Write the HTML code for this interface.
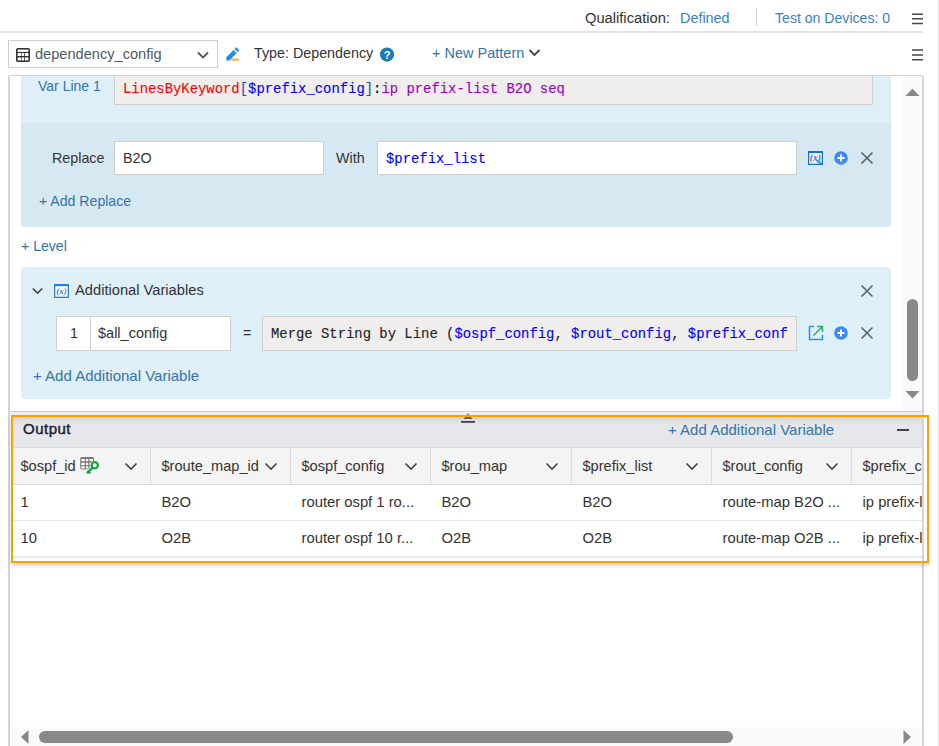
<!DOCTYPE html>
<html><head><meta charset="utf-8">
<style>
html,body{margin:0;padding:0;}
body{width:939px;height:746px;overflow:hidden;position:relative;background:#fff;font-family:"Liberation Sans",sans-serif;color:#333;}
.a{position:absolute;}
.t{position:absolute;white-space:nowrap;line-height:1;}
.mono{font-family:"Liberation Mono",monospace;-webkit-text-stroke:0.12px currentColor;}
.link{color:#3473ad;}
.box{position:absolute;box-sizing:border-box;}
</style></head><body>

<!-- right edge line -->
<div class="a" style="left:938px;top:0;width:1px;height:746px;background:#e3e7ec"></div>

<!-- top bar -->
<div class="t" style="left:585px;top:11px;font-size:14.7px;color:#333">Qualification:</div>
<div class="t" style="left:680px;top:11px;font-size:14.4px;color:#3b7fc2">Defined</div>
<div class="a" style="left:756px;top:8px;width:1px;height:18px;background:#d0d4d8"></div>
<div class="t" style="left:775px;top:11px;font-size:14.1px;color:#3b7fc2">Test on Devices: 0</div>
<svg class="a" style="left:910px;top:10px" width="16" height="18" viewBox="910 10 16 18"><path d="M912 14.2 H923 M912 18.8 H923 M912 23.4 H923" stroke="#4a4a4a" stroke-width="1.5"/></svg>
<div class="a" style="left:0;top:31px;width:923px;height:2px;background:#e0e4e8"></div>

<!-- toolbar -->
<div class="box" style="left:8px;top:40px;width:210px;height:28px;border:1px solid #cfcfcf;background:#fff"></div>
<svg class="a" style="left:16px;top:48px" width="14" height="14" viewBox="0 0 14 14">
  <rect x="0" y="0" width="14" height="14" rx="1.8" fill="#333"/>
  <g fill="#fff"><rect x="1.6" y="1.6" width="10.8" height="2.3"/>
  <rect x="1.6" y="5" width="3.3" height="3"/><rect x="5.6" y="5" width="2.5" height="3"/><rect x="8.9" y="5" width="3.5" height="3"/>
  <rect x="1.6" y="9.4" width="3.3" height="3"/><rect x="5.6" y="9.4" width="2.5" height="3"/><rect x="8.9" y="9.4" width="3.5" height="3"/></g>
</svg>
<div class="t" style="left:35px;top:47px;font-size:14.6px;color:#4e5a68">dependency_config</div>
<svg class="a" style="left:196px;top:50px" width="14" height="10" viewBox="0 0 14 10"><path d="M2 2.5 L7 7.5 L12 2.5" fill="none" stroke="#555" stroke-width="1.8"/></svg>
<svg class="a" style="left:224px;top:45px" width="17" height="17" viewBox="0 0 17 17">
  <path d="M2.3 15.5 L2.3 12.3 L9.6 5 L12.6 8 L5.5 15.5 Z" fill="#1e8ff0"/>
  <path d="M10.6 4 L12.3 2.3 L15.3 5.3 L13.6 7 Z" fill="#1e8ff0"/>
  <rect x="7" y="13.5" width="8" height="2.3" rx="1" fill="#f5b042"/>
</svg>
<div class="t" style="left:254px;top:46px;font-size:14.3px;color:#333">Type: Dependency</div>
<svg class="a" style="left:379px;top:47px" width="16" height="15" viewBox="0 0 16 15">
  <circle cx="8" cy="7.6" r="7.1" fill="#1f7ab8"/>
  <text x="8" y="11.9" text-anchor="middle" font-family="Liberation Sans" font-weight="bold" font-size="11" fill="#fff">?</text>
</svg>
<div class="t link" style="left:432px;top:46px;font-size:14.5px">+ New Pattern</div>
<svg class="a" style="left:527px;top:47px" width="15" height="12" viewBox="0 0 15 12"><path d="M2.5 3 L7.5 8 L12.5 3" fill="none" stroke="#444" stroke-width="1.8"/></svg>
<svg class="a" style="left:910px;top:45px" width="16" height="18" viewBox="910 45 16 18"><path d="M912 50 H923 M912 54.9 H923 M912 59.8 H923" stroke="#4a4a4a" stroke-width="1.5"/></svg>

<!-- main panel -->
<div class="box" style="left:8px;top:75px;width:916px;height:672px;border:1px solid #d2d2d2;border-left:2px solid #d4d4d4;border-right:2px solid #d6d6d6;border-bottom:none;border-radius:2px 2px 0 0;background:#fff"></div>
<!-- vertical scrollbar -->
<div class="a" style="left:903px;top:76px;width:19px;height:335px;background:#fafafa"></div>
<svg class="a" style="left:903px;top:85px" width="19" height="14" viewBox="0 0 19 14"><path d="M2.5 11 L9.5 3.5 L16.5 11 Z" fill="#888"/></svg>
<div class="a" style="left:907px;top:299px;width:11px;height:82px;border-radius:6px;background:#888"></div>
<svg class="a" style="left:903px;top:388px" width="19" height="14" viewBox="0 0 19 14"><path d="M2.5 3 L9.5 10.5 L16.5 3 Z" fill="#888"/></svg>

<!-- var line block -->
<div class="a" style="left:21px;top:76px;width:870px;height:47px;background:#dfeff8"></div>
<div class="t" style="left:38px;top:79px;font-size:14px;color:#3672ac">Var Line 1</div>
<div class="box" style="left:114px;top:76px;width:759px;height:29px;border:1px solid #cfcfcf;border-top:none;background:#f0eded"></div>
<div class="t mono" style="left:123px;top:82.5px;font-size:13.9px"><span style="color:#ff0000">LinesByKeyword</span><span style="color:#1d5a94">[</span><span style="color:#0000ff">$prefix_config</span><span style="color:#1d5a94">]</span><span style="color:#111">:</span><span style="color:#9a00cc">ip prefix-list B2O seq</span></div>

<!-- replace block -->
<div class="a" style="left:21px;top:123px;width:870px;height:104px;background:#d6e9f3;border-radius:0 0 4px 4px"></div>
<div class="t" style="left:52px;top:150.5px;font-size:14.3px;color:#333">Replace</div>
<div class="box" style="left:114px;top:141px;width:210px;height:34px;border:1px solid #cfcfcf;background:#fff"></div>
<div class="t" style="left:123px;top:150.5px;font-size:14.3px;color:#333">B2O</div>
<div class="t" style="left:336px;top:150.5px;font-size:14.3px;color:#333">With</div>
<div class="box" style="left:377px;top:141px;width:420px;height:34px;border:1px solid #cfcfcf;background:#fff"></div>
<div class="t mono" style="left:386px;top:153px;font-size:13.9px;color:#0000ff">$prefix_list</div>
<svg class="a" style="left:808px;top:151px" width="15" height="14" viewBox="0 0 15 14">
  <rect x="0" y="0" width="15" height="14" fill="#1a70c8"/>
  <rect x="1.3" y="2.1" width="12.4" height="10.6" fill="#fff"/>
  <text x="7.3" y="10" text-anchor="middle" font-family="Liberation Serif" font-weight="bold" font-style="italic" font-size="9.5" fill="#1a70c8">(x)</text>
  <circle cx="10.6" cy="10.3" r="1.9" fill="#5aa0e0"/>
  <path d="M11.8 11.6 L14.2 13.6" stroke="#1a70c8" stroke-width="1.6"/>
</svg>
<svg class="a" style="left:834px;top:151px" width="14" height="14" viewBox="0 0 14 14">
  <circle cx="7" cy="7" r="6.8" fill="#3d8bf0"/>
  <rect x="3.5" y="6" width="7" height="2" fill="#fff"/><rect x="6" y="3.5" width="2" height="7" fill="#fff"/>
</svg>
<svg class="a" style="left:860px;top:151px" width="14" height="14" viewBox="0 0 14 14"><path d="M1.5 1.5 L12.5 12.5 M12.5 1.5 L1.5 12.5" stroke="#5c6870" stroke-width="1.7"/></svg>
<div class="t link" style="left:39px;top:194px;font-size:14.1px">+ Add Replace</div>

<div class="t link" style="left:21px;top:239px;font-size:14.1px">+ Level</div>

<!-- additional variables block -->
<div class="a" style="left:21px;top:267px;width:870px;height:132px;background:#dfeff8;border-radius:4px"></div>
<svg class="a" style="left:31px;top:285px" width="14" height="11" viewBox="0 0 14 11"><path d="M1.8 3.5 L6.5 8 L11.2 3.5" fill="none" stroke="#4a4a4a" stroke-width="1.7"/></svg>
<svg class="a" style="left:54px;top:284px" width="15" height="14" viewBox="0 0 15 14">
  <rect x="0" y="0" width="15" height="14" fill="#2a80d0"/>
  <rect x="1.3" y="2.2" width="12.4" height="10.5" fill="#fff"/>
  <text x="7.5" y="10.3" text-anchor="middle" font-family="Liberation Serif" font-weight="bold" font-style="italic" font-size="9" fill="#2a80d0">(x)</text>
</svg>
<div class="t" style="left:75px;top:283px;font-size:14.7px;color:#333">Additional Variables</div>
<svg class="a" style="left:860px;top:284px" width="14" height="14" viewBox="0 0 14 14"><path d="M1.5 1.5 L12.5 12.5 M12.5 1.5 L1.5 12.5" stroke="#5c6870" stroke-width="1.7"/></svg>

<div class="box" style="left:56px;top:316px;width:35px;height:35px;border:1px solid #cfcfcf;background:#fff"></div>
<div class="box" style="left:90px;top:316px;width:141px;height:35px;border:1px solid #cfcfcf;background:#fff"></div>
<div class="t" style="left:70px;top:326px;font-size:14.3px;color:#333">1</div>
<div class="t" style="left:98px;top:326px;font-size:14.5px;color:#333">$all_config</div>
<div class="t" style="left:243px;top:326px;font-size:14.3px;color:#333">=</div>
<div class="box" style="left:262px;top:316px;width:535px;height:35px;border:1px solid #cfcfcf;background:#f0eded"></div>
<div class="t mono" style="left:271px;top:328px;font-size:13.9px;color:#222">Merge String by Line (<span style="color:#0000ff">$ospf_config</span>, <span style="color:#0000ff">$rout_config</span>, <span style="color:#0000ff">$prefix_conf</span></div>
<svg class="a" style="left:808px;top:325px" width="16" height="16" viewBox="0 0 16 16">
  <path d="M6 1.5 L1.5 1.5 L1.5 14.5 L14.5 14.5 L14.5 10" fill="none" stroke="#2196f3" stroke-width="1.5"/>
  <path d="M5.5 10.5 L14 2 M9 1.5 L14.5 1.5 L14.5 7" fill="none" stroke="#2eaa6a" stroke-width="1.5"/>
</svg>
<svg class="a" style="left:834px;top:326px" width="14" height="14" viewBox="0 0 14 14">
  <circle cx="7" cy="7" r="6.8" fill="#3d8bf0"/>
  <rect x="3.5" y="6" width="7" height="2" fill="#fff"/><rect x="6" y="3.5" width="2" height="7" fill="#fff"/>
</svg>
<svg class="a" style="left:860px;top:326px" width="14" height="14" viewBox="0 0 14 14"><path d="M1.5 1.5 L12.5 12.5 M12.5 1.5 L1.5 12.5" stroke="#5c6870" stroke-width="1.7"/></svg>
<div class="t link" style="left:33px;top:368px;font-size:15px">+ Add Additional Variable</div>

<!-- bottom border of scroll area -->
<div class="a" style="left:8px;top:411px;width:915px;height:1px;background:#cfcfcf"></div>
<div class="a" style="left:10px;top:412px;width:912px;height:3px;background:#eceef0"></div>

<!-- output panel -->
<div class="a" style="left:10px;top:415px;width:912px;height:147px;background:#fff"></div>
<div class="a" style="left:13px;top:417px;width:909px;height:30px;background:linear-gradient(#d3d5d9 0px,#e3e4e8 6px,#e6e7ea 10px)"></div>
<div class="t" style="left:23px;top:421px;font-size:15px;letter-spacing:0.5px;color:#1c2033;-webkit-text-stroke:0.45px #1c2033">Output</div>
<div class="t link" style="left:668px;top:421.5px;font-size:15px">+ Add Additional Variable</div>
<div class="a" style="left:897px;top:429px;width:12px;height:2px;background:#444"></div>

<div class="a" style="left:13px;top:447px;width:909px;height:38px;background:#f4f4f4;border-top:1px solid #d9d9d9;border-bottom:1px solid #d9d9d9;box-sizing:border-box"></div>
<div class="a" style="left:13px;top:447px;width:909px;height:115px;overflow:hidden">
<div class="t" style="left:7.5px;top:12px;font-size:14.6px;color:#333">$ospf_id</div>
<svg class="a" style="left:67px;top:9px" width="22" height="20" viewBox="80 456 22 20">
 <rect x="80.2" y="457" width="13.9" height="12.4" rx="1.6" fill="#7a7a7a"/>
 <g fill="#fff"><rect x="81.3" y="459" width="3.4" height="2.2"/><rect x="85.9" y="459" width="2.3" height="2.2"/><rect x="89.5" y="459" width="3.6" height="2.2"/>
 <rect x="81.3" y="462.8" width="3.4" height="2.4"/><rect x="85.9" y="462.8" width="2.3" height="2.4"/><rect x="89.5" y="462.8" width="3.6" height="2.4"/>
 <rect x="81.3" y="466.3" width="3.4" height="2.2"/><rect x="85.9" y="466.3" width="2.3" height="2.2"/><rect x="89.5" y="466.3" width="3.6" height="2.2"/></g>
 <circle cx="94.8" cy="465.3" r="4.6" fill="#f4f4f4"/>
 <path d="M92.5 467.5 L86.8 473.3" stroke="#f4f4f4" stroke-width="4.5"/>
 <circle cx="94.8" cy="465.3" r="3.1" fill="none" stroke="#1ea34c" stroke-width="2.3"/>
 <path d="M92.6 467.6 L87 473.2" stroke="#1ea34c" stroke-width="2.6"/>
 <path d="M88.6 471.4 L90.3 473.4" stroke="#1ea34c" stroke-width="2"/>
</svg>
<svg class="a" style="left:110.5px;top:14px" width="14" height="10" viewBox="0 0 14 10"><path d="M1.5 2.5 L7 8 L12.5 2.5" fill="none" stroke="#444" stroke-width="1.6"/></svg>
<div class="t" style="left:7.5px;top:48px;font-size:14.8px;color:#333">1</div>
<div class="t" style="left:7.5px;top:84px;font-size:14.8px;color:#333">10</div>
<div class="a" style="left:137px;top:0;width:1px;height:38px;background:#dcdcdc"></div>
<div class="t" style="left:148.5px;top:12px;font-size:14.6px;color:#333">$route_map_id</div>
<svg class="a" style="left:250.5px;top:14px" width="14" height="10" viewBox="0 0 14 10"><path d="M1.5 2.5 L7 8 L12.5 2.5" fill="none" stroke="#444" stroke-width="1.6"/></svg>
<div class="t" style="left:148.5px;top:48px;font-size:14.8px;color:#333">B2O</div>
<div class="t" style="left:148.5px;top:84px;font-size:14.8px;color:#333">O2B</div>
<div class="a" style="left:277px;top:0;width:1px;height:38px;background:#dcdcdc"></div>
<div class="t" style="left:288.5px;top:12px;font-size:14.6px;color:#333">$ospf_config</div>
<svg class="a" style="left:390.5px;top:14px" width="14" height="10" viewBox="0 0 14 10"><path d="M1.5 2.5 L7 8 L12.5 2.5" fill="none" stroke="#444" stroke-width="1.6"/></svg>
<div class="t" style="left:288.5px;top:48px;font-size:14.8px;color:#333">router ospf 1 ro...</div>
<div class="t" style="left:288.5px;top:84px;font-size:14.8px;color:#333">router ospf 10 r...</div>
<div class="a" style="left:417px;top:0;width:1px;height:38px;background:#dcdcdc"></div>
<div class="t" style="left:428.5px;top:12px;font-size:14.6px;color:#333">$rou_map</div>
<svg class="a" style="left:531.5px;top:14px" width="14" height="10" viewBox="0 0 14 10"><path d="M1.5 2.5 L7 8 L12.5 2.5" fill="none" stroke="#444" stroke-width="1.6"/></svg>
<div class="t" style="left:428.5px;top:48px;font-size:14.8px;color:#333">B2O</div>
<div class="t" style="left:428.5px;top:84px;font-size:14.8px;color:#333">O2B</div>
<div class="a" style="left:558px;top:0;width:1px;height:38px;background:#dcdcdc"></div>
<div class="t" style="left:569.5px;top:12px;font-size:14.6px;color:#333">$prefix_list</div>
<svg class="a" style="left:671.5px;top:14px" width="14" height="10" viewBox="0 0 14 10"><path d="M1.5 2.5 L7 8 L12.5 2.5" fill="none" stroke="#444" stroke-width="1.6"/></svg>
<div class="t" style="left:569.5px;top:48px;font-size:14.8px;color:#333">B2O</div>
<div class="t" style="left:569.5px;top:84px;font-size:14.8px;color:#333">O2B</div>
<div class="a" style="left:698px;top:0;width:1px;height:38px;background:#dcdcdc"></div>
<div class="t" style="left:709.5px;top:12px;font-size:14.6px;color:#333">$rout_config</div>
<svg class="a" style="left:811.5px;top:14px" width="14" height="10" viewBox="0 0 14 10"><path d="M1.5 2.5 L7 8 L12.5 2.5" fill="none" stroke="#444" stroke-width="1.6"/></svg>
<div class="t" style="left:709.5px;top:48px;font-size:14.8px;color:#333">route-map B2O ...</div>
<div class="t" style="left:709.5px;top:84px;font-size:14.8px;color:#333">route-map O2B ...</div>
<div class="a" style="left:838px;top:0;width:1px;height:38px;background:#dcdcdc"></div>
<div class="t" style="left:849.5px;top:12px;font-size:14.6px;color:#333">$prefix_config</div>
<svg class="a" style="left:951.5px;top:14px" width="14" height="10" viewBox="0 0 14 10"><path d="M1.5 2.5 L7 8 L12.5 2.5" fill="none" stroke="#444" stroke-width="1.6"/></svg>
<div class="t" style="left:849.5px;top:48px;font-size:14.8px;color:#333">ip prefix-list B2O</div>
<div class="t" style="left:849.5px;top:84px;font-size:14.8px;color:#333">ip prefix-list O2B</div>
<div class="a" style="left:0;top:73px;width:909px;height:1px;background:#e6e6e6"></div>
<div class="a" style="left:0;top:109px;width:909px;height:1px;background:#e3e3e3"></div>
<div class="a" style="left:0;top:110px;width:909px;height:2px;background:#f3f3f3"></div>
</div>
<svg class="a" style="left:460px;top:412px" width="16" height="12" viewBox="460 412 16 12"><path d="M463.5 419 L468 413.3 L472.5 419 Z" fill="#5a606c"/><rect x="461" y="421" width="14" height="1.8" fill="#3a4250"/></svg>
<!-- orange border -->
<div class="box" style="left:11px;top:415px;width:918px;height:148px;border:2px solid #ffa000;box-shadow:0 3px 4px rgba(0,0,0,0.16)"></div>

<!-- horizontal scrollbar -->
<div class="a" style="left:10px;top:727px;width:912px;height:19px;background:#fafafa"></div>
<svg class="a" style="left:19px;top:729px" width="12" height="16" viewBox="0 0 12 16"><path d="M9.5 1 L2 8 L9.5 15 Z" fill="#888"/></svg>
<div class="a" style="left:39px;top:731px;width:694px;height:12px;border-radius:6px;background:#888"></div>
<svg class="a" style="left:901px;top:729px" width="12" height="16" viewBox="0 0 12 16"><path d="M2.5 1 L10 8 L2.5 15 Z" fill="#888"/></svg>
</body></html>
